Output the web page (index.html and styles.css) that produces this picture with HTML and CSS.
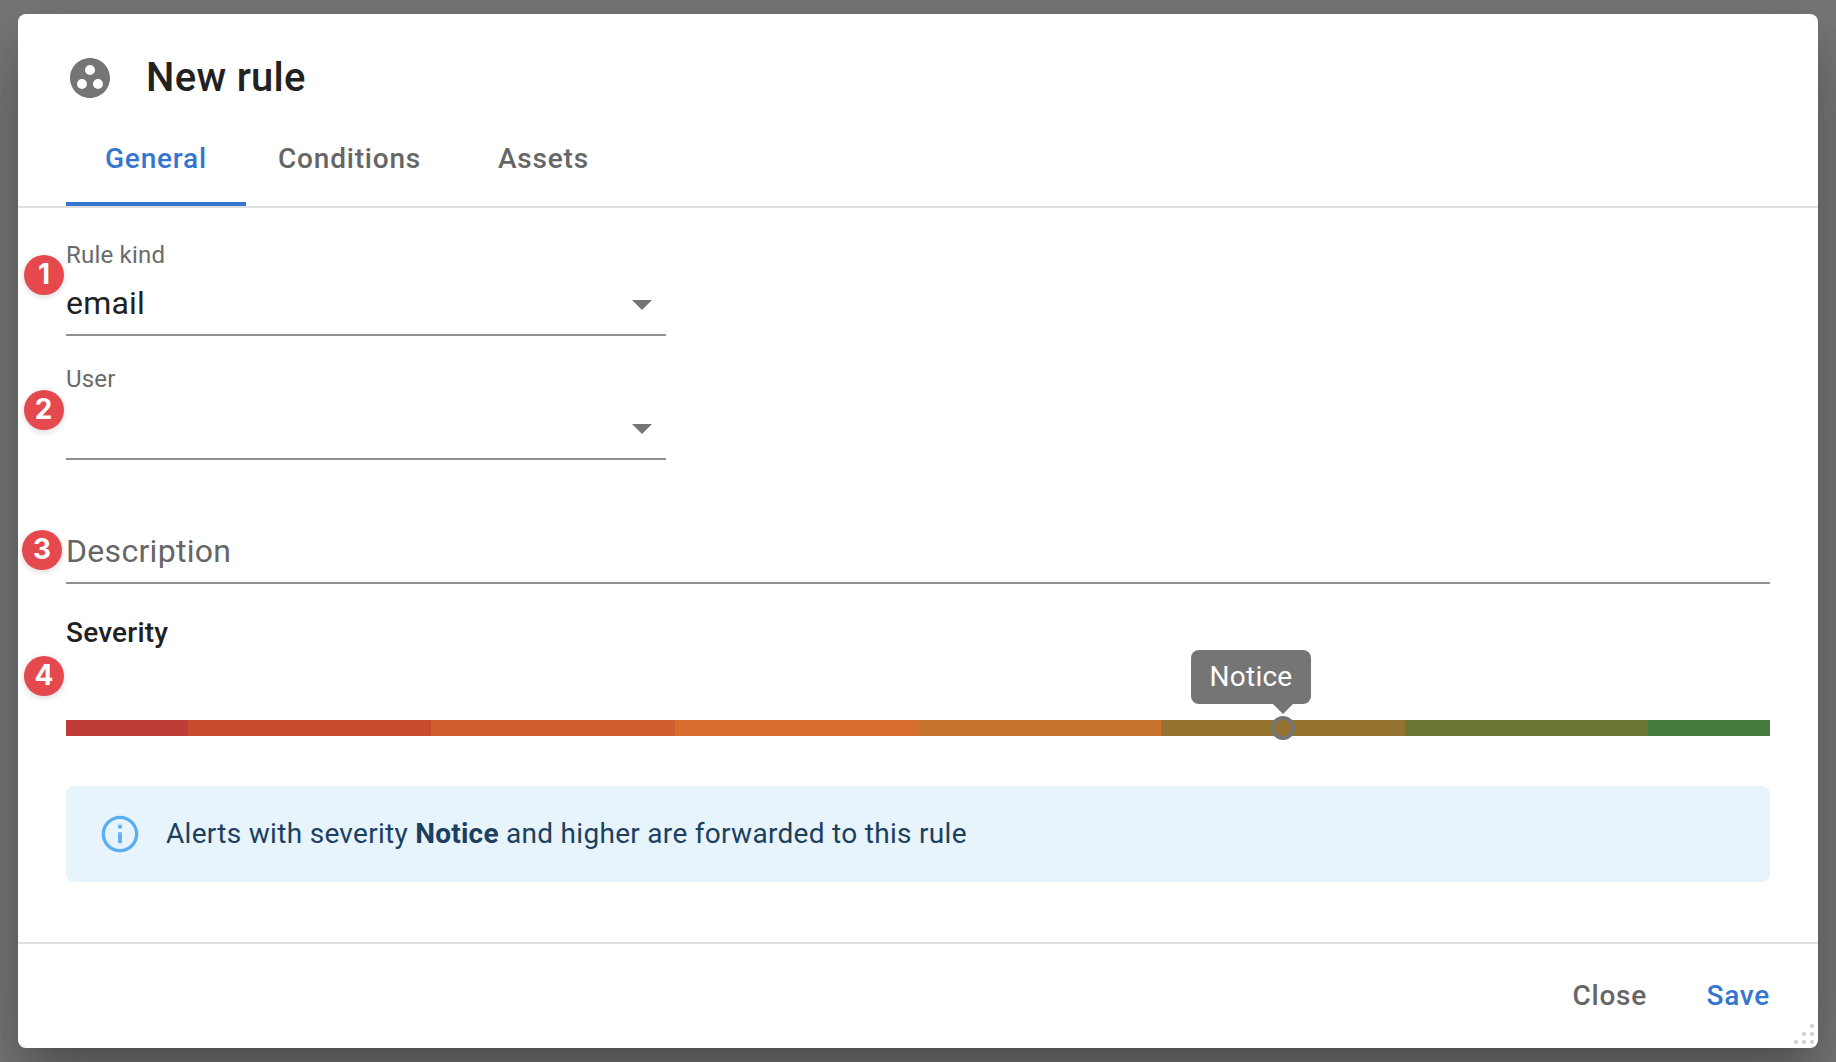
FILE: index.html
```html
<!DOCTYPE html>
<html lang="en">
<head>
<meta charset="utf-8">
<title>New rule</title>
<link rel="stylesheet" href="styles.css">
</head>
<body>
<main class="dialog">
  <header class="head">
    <svg class="head-icon" viewBox="0 0 24 24"><path fill="#757575" fill-rule="evenodd" d="M12 2C6.48 2 2 6.48 2 12s4.480 10 10 10 10-4.480 10-10S17.520 2 12 2zM8 17.500a2.500 2.500 0 0 1 0-5 2.500 2.500 0 0 1 0 5zM9.500 8a2.500 2.500 0 0 1 5 0 2.500 2.500 0 0 1-5 0zm6.500 9.500a2.500 2.500 0 0 1 0-5 2.500 2.500 0 0 1 0 5z"/></svg>
    <h1 class="title">New rule</h1>
  </header>
  <nav class="tabs">
    <span class="tab tab-active">General</span>
    <span class="tab tab-conditions">Conditions</span>
    <span class="tab">Assets</span>
  </nav>
  <section class="content">
    <div class="field select">
      <span class="badge b1">1</span>
      <span class="label">Rule kind</span>
      <div class="value"><span>email</span><i class="arrow"></i></div>
    </div>
    <div class="field select">
      <span class="badge b2">2</span>
      <span class="label">User</span>
      <div class="value"><i class="arrow"></i></div>
    </div>
    <div class="field">
      <span class="badge b3">3</span>
      <span class="label"></span>
      <div class="value placeholder"><span>Description</span></div>
    </div>
    <div class="severity">
      <span class="badge b4">4</span>
      <h2 class="severity-title">Severity</h2>
      <div class="bar">
        <i class="seg half c0"></i><i class="seg c1"></i><i class="seg c2"></i><i class="seg c3"></i><i class="seg c4"></i><i class="seg c5"></i><i class="seg c6"></i><i class="seg half c7"></i>
        <span class="thumb"></span>
        <span class="tip">Notice</span>
      </div>
    </div>
    <div class="alert">
      <svg class="info" viewBox="0 0 24 24"><path fill="#5aaef2" d="M11 7h2v2h-2zM11 11h2v6h-2zM12 2C6.480 2 2 6.480 2 12s4.480 10 10 10 10-4.480 10-10S17.520 2 12 2zm0 18.200c-4.520 0-8.200-3.680-8.200-8.200S7.480 3.800 12 3.800s8.200 3.680 8.200 8.200-3.680 8.200-8.200 8.200z"/></svg>
      <p class="alert-text">Alerts with severity <b>Notice</b> and higher are forwarded to this rule</p>
    </div>
  </section>
  <footer class="foot">
    <span class="btn">Close</span>
    <span class="btn save">Save</span>
    <svg class="grip" viewBox="0 0 20 20" fill="#ccc"><circle cx="18" cy="2" r="2"/><circle cx="10" cy="10" r="2"/><circle cx="18" cy="10" r="2"/><circle cx="2" cy="18" r="2"/><circle cx="10" cy="18" r="2"/><circle cx="18" cy="18" r="2"/></svg>
  </footer>
</main>
</body>
</html>
```
FILE: styles.css
```css
* { box-sizing: border-box; }
body {
  margin: 0; height: 1062px; overflow: hidden; padding: 14px 18px;
  background: #777878; color: #212121;
  font-family: Roboto, "Liberation Sans", sans-serif;
}
.dialog {
  display: flex; flex-direction: column; height: 1034px;
  background: #fff; border-radius: 8px;
  box-shadow: 0 22px 30px -14px rgba(0,0,0,.2), 0 48px 76px 6px rgba(0,0,0,.14), 0 18px 92px 16px rgba(0,0,0,.12);
}
.head { display: flex; align-items: center; gap: 32px; height: 104px; padding: 24px 48px 0; }
.head-icon { width: 48px; height: 48px; }
.title { margin: 0; font-size: 40px; line-height: 48px; font-weight: 500; letter-spacing: .3px; }
.tabs { display: flex; height: 90px; padding-left: 48px; border-bottom: 2px solid #e0e0e0; }
.tab { font-size: 28px; line-height: 32px; font-weight: 500; letter-spacing: .8px; color: #666; padding-top: 25px; }
.tab-active { width: 180px; padding-left: 39px; margin-right: 32px; color: #3575d0; border-bottom: 4px solid #3575d0; }
.tab-conditions { width: 220px; }
.content { height: 734px; padding: 0 48px; }
.field { position: relative; height: 124px; padding-top: 29px; border-bottom: 2px solid #919191; }
.field:first-child { height: 128px; padding-top: 33px; }
.select { width: 600px; }
.label { display: block; height: 28px; font-size: 24px; line-height: 28px; letter-spacing: .2px; color: #6a6a6a; }
.value { display: flex; align-items: center; justify-content: space-between; height: 40px; margin-top: 14px; padding-right: 14px; font-size: 32px; line-height: 40px; letter-spacing: .2px; }
.placeholder { color: #666; letter-spacing: .3px; }
.arrow { margin: 4px 0 0 auto; border: 10px solid transparent; border-top-color: #757575; border-bottom: 0; }
.badge {
  position: absolute; width: 40px; height: 40px; border-radius: 50%;
  background: #e5484d; color: #fff; box-shadow: 0 2px 6px rgba(0,0,0,.15);
  font: 700 28px/39px Inter, sans-serif; text-align: center;
}
.b1 { left: -42px; top: 47px; }
.b2 { left: -42.500px; top: 54px; }
.b3 { left: -44px; top: 70px; }
.b4 { left: -42px; top: 72px; }
.severity { position: relative; padding-top: 32px; }
.severity-title { margin: 0; font-size: 28px; line-height: 34px; font-weight: 500; letter-spacing: .2px; }
.bar { position: relative; display: flex; height: 16px; margin-top: 70px; }
.seg { flex: 2; }
.half { flex: 1; }
.c0 { background: #c03d37; } .c1 { background: #c84b2f; } .c2 { background: #d05d2e; } .c3 { background: #d86d2d; }
.c4 { background: #c7732e; } .c5 { background: #95732f; } .c6 { background: #6a7733; } .c7 { background: #457c3c; }
.thumb { position: absolute; left: 1205px; top: -4px; width: 24px; height: 24px; border: 4px solid #757575; border-radius: 50%; }
.tip {
  position: absolute; left: 1125px; top: -70px; width: 120px; height: 54px; border-radius: 8px;
  background: #757575; color: #fff; font-size: 28px; line-height: 53px; letter-spacing: .25px; text-align: center;
}
.tip::after { content: ""; position: absolute; left: 82px; top: 54px; border: 10px solid transparent; border-top-color: #757575; border-bottom: 0; }
.alert { display: flex; align-items: center; gap: 24px; height: 96px; margin-top: 50px; padding: 0 32px; border-radius: 8px; background: #e7f4fc; color: #1b4060; }
.info { width: 44px; height: 44px; }
.alert-text { margin: 0; font-size: 28px; line-height: 40px; letter-spacing: .3px; }
.alert-text b { letter-spacing: .2px; }
.foot { position: relative; display: flex; justify-content: flex-end; gap: 59.500px; height: 106px; padding: 36px 48px 0; border-top: 2px solid #e0e0e0; }
.btn { font-size: 28px; line-height: 32px; font-weight: 500; letter-spacing: .75px; color: #666; }
.save { color: #3575d0; }
.grip { position: absolute; right: 4px; bottom: 4px; width: 20px; height: 20px; }
```
